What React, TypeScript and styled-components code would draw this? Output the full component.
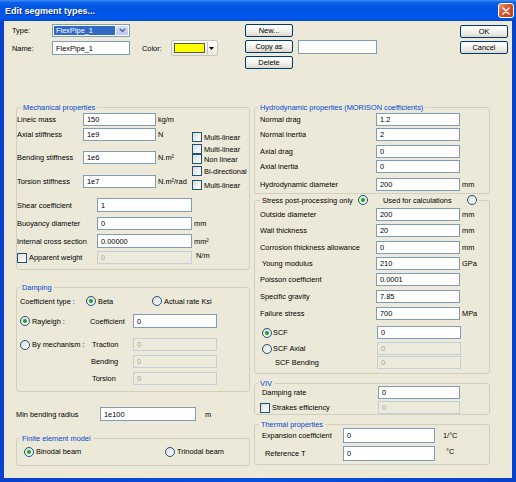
import React from 'react';
import styled, { createGlobalStyle } from 'styled-components';

const FONT = `'Liberation Sans', Arial, sans-serif`;
const SIZE = '7.4px';

const GlobalStyle = createGlobalStyle`
  html, body {
    margin: 0;
    padding: 0;
    background: #ffffff;
  }
  body {
    font-family: ${FONT};
    font-size: ${SIZE};
    color: #000;
  }
  * {
    box-sizing: border-box;
  }
`;

// fenêtre XP
const Window = styled.div`
  width: 516px;
  height: 482px;
  display: flex;
  flex-direction: column;
  background: #0a4bda;
  overflow: hidden;
`;

const TitleBar = styled.div`
  height: 21px;
  flex: none;
  display: flex;
  align-items: center;
  justify-content: space-between;
  padding: 0 2px 0 5px;
  background: linear-gradient(
    to bottom,
    #3d8ef7 0%,
    #0b61e8 12%,
    #0054e3 45%,
    #0058ee 85%,
    #0047cf 100%
  );
  color: #fff;
  font-weight: bold;
  font-size: 9px;
  text-shadow: 1px 1px #0c2a8c;
`;

const CloseButton = styled.div`
  width: 16px;
  height: 15px;
  border: 1px solid #fff;
  border-radius: 3px;
  background: linear-gradient(135deg, #ec9a7c 0%, #d7532b 45%, #c3380f 100%);
  display: flex;
  align-items: center;
  justify-content: center;
`;

const Frame = styled.div`
  flex: 1;
  display: flex;
  padding: 0 4px 4px 4px;
  background: linear-gradient(to right, #0842cd, #0a4fdd 50%, #0842cd);
`;

const Body = styled.div`
  flex: 1;
  display: flex;
  flex-direction: column;
  background: #ece9d8;
`;

// en-tête : type, nom, couleur, boutons
const TopBar = styled.div`
  height: 86px;
  flex: none;
  display: flex;
  align-items: flex-start;
  padding: 3px 4px 0 8px;
`;

const IdentityGrid = styled.div`
  display: grid;
  grid-template-columns: 40px 78px 12px 29px 47px;
  grid-template-rows: 13px 16px;
  row-gap: 3px;
  align-items: center;
`;

const Combo = styled.div`
  height: 13px;
  display: flex;
  padding: 1px;
  border: 1px solid #7f9db9;
  background: #fff;
`;

const ComboText = styled.span`
  flex: 1;
  display: flex;
  align-items: center;
  padding-left: 2px;
  background: #316ac5;
  color: #fff;
`;

const ComboArrow = styled.span`
  width: 12px;
  display: flex;
  align-items: center;
  justify-content: center;
  margin-left: 1px;
  background: linear-gradient(to bottom, #d4e0fb, #b6c9f4);
  border-radius: 1px;
`;

const ColorButton = styled.div`
  height: 16px;
  display: flex;
  align-items: center;
  padding: 0 2px;
  border: 1px solid #c9c6b8;
  border-radius: 2px;
  background: linear-gradient(to bottom, #fefefe, #ebe8dc);
`;

const Swatch = styled.span<{ $color: string }>`
  width: 31px;
  height: 10px;
  border: 1px solid #555;
  background: ${(p) => p.$color};
`;

const ColorDrop = styled.span`
  flex: 1;
  display: flex;
  align-items: center;
  justify-content: center;
  height: 12px;
  margin-left: 2px;
  border-left: 1px solid #c5c2b2;
`;

const ButtonColumn = styled.div<{ $ml: number; $mt?: number }>`
  display: flex;
  flex-direction: column;
  gap: 3px;
  margin-left: ${(p) => p.$ml}px;
  margin-top: ${(p) => p.$mt ?? 0}px;
`;

const Button = styled.button`
  width: 48px;
  height: 13px;
  padding: 0;
  font-family: ${FONT};
  font-size: ${SIZE};
  color: #000;
  border: 1px solid #003c74;
  border-radius: 2px;
  background: linear-gradient(to bottom, #ffffff 0%, #f3f2ec 55%, #dcd7cb 100%);
`;

const Spacer = styled.div`
  flex: 1;
`;

// colonnes
const Columns = styled.div`
  flex: 1;
  display: flex;
  gap: 4px;
  padding-left: 12px;
`;

const Column = styled.div<{ $w: number }>`
  width: ${(p) => p.$w}px;
  display: flex;
  flex-direction: column;
`;

const GroupBox = styled.div<{ $h: number; $mt?: number; $pl?: number }>`
  height: ${(p) => p.$h}px;
  margin-top: ${(p) => p.$mt ?? 0}px;
  padding-left: ${(p) => p.$pl ?? 0}px;
  border: 1px solid #d0d0bf;
  border-radius: 3px;
  display: flex;
  flex-direction: column;
  flex: none;
`;

const Legend = styled.div<{ $ml?: number }>`
  align-self: flex-start;
  height: 10px;
  display: flex;
  align-items: center;
  margin: -6px 0 0 ${(p) => p.$ml ?? 3}px;
  padding: 0 2px;
  background: #ece9d8;
  color: #0046d5;
  white-space: nowrap;
`;

const LegendText = styled.span<{ $w?: number; $ml?: number }>`
  width: ${(p) => (p.$w ? `${p.$w}px` : 'auto')};
  margin-left: ${(p) => p.$ml ?? 0}px;
  color: #000;
`;

const FieldRow = styled.div<{ $cols: string; $mt?: number; $h?: number }>`
  display: grid;
  grid-template-columns: ${(p) => p.$cols};
  align-items: center;
  height: ${(p) => p.$h ?? 13}px;
  margin-top: ${(p) => p.$mt ?? 0}px;
  white-space: nowrap;
  flex: none;
`;

const Label = styled.span<{ $indent?: number }>`
  padding-left: ${(p) => p.$indent ?? 0}px;
  overflow: hidden;
`;

const Unit = styled.span<{ $pl?: number; $up?: number }>`
  padding-left: ${(p) => p.$pl ?? 2}px;
  position: relative;
  top: ${(p) => -(p.$up ?? 0)}px;
  overflow: hidden;
`;

const TextBox = styled.input`
  height: 100%;
  width: 100%;
  min-width: 0;
  margin: 0;
  padding: 0 0 0 3px;
  font-family: ${FONT};
  font-size: ${SIZE};
  color: #000;
  border: 1px solid #7f9db9;
  background: #fff;
  outline: none;

  &:disabled {
    color: #aca899;
    border-color: #c3cfd9;
    background: #ebeadb;
  }
`;

const CopyAsBox = styled(TextBox)`
  width: 79px;
  height: 14px;
  margin-left: 5px;
  margin-top: 16px;
`;

const StiffnessBlock = styled.div`
  height: 77px;
  display: flex;
  flex: none;
`;

const RowStack = styled.div<{ $w: number }>`
  width: ${(p) => p.$w}px;
  display: flex;
  flex-direction: column;
`;

const CheckStack = styled.div`
  display: flex;
  flex-direction: column;
`;

const Option = styled.label<{ $mt?: number; $w?: number; $gap?: number; $pl?: number }>`
  display: flex;
  align-items: center;
  gap: ${(p) => p.$gap ?? 2}px;
  height: 10px;
  width: ${(p) => (p.$w ? `${p.$w}px` : 'auto')};
  margin-top: ${(p) => p.$mt ?? 0}px;
  padding-left: ${(p) => p.$pl ?? 0}px;
  white-space: nowrap;
  flex: none;
`;

const CheckBox = styled.span`
  width: 10px;
  height: 10px;
  flex: none;
  border: 1px solid #1c5180;
  background: linear-gradient(135deg, #dcdcd5, #ffffff);
`;

const Radio = styled.span<{ $checked?: boolean }>`
  width: 10px;
  height: 10px;
  flex: none;
  border-radius: 50%;
  border: 1px solid #1c5180;
  background: linear-gradient(135deg, #dcdcd5, #ffffff);
  display: inline-flex;
  align-items: center;
  justify-content: center;

  &::after {
    content: '';
    width: 4px;
    height: 4px;
    border-radius: 50%;
    background: #21a121;
    display: ${(p) => (p.$checked ? 'block' : 'none')};
  }
`;

const OptionRow = styled.div<{ $mt?: number; $h?: number }>`
  display: flex;
  align-items: center;
  height: ${(p) => p.$h ?? 10}px;
  margin-top: ${(p) => p.$mt ?? 0}px;
  white-space: nowrap;
  flex: none;
`;

const FixedLabel = styled.span<{ $w: number }>`
  width: ${(p) => p.$w}px;
  flex: none;
`;

const Chevron = () => (
  <svg width="7" height="5" viewBox="0 0 7 5">
    <path d="M0.8 0.8 L3.5 3.6 L6.2 0.8" fill="none" stroke="#4d6185" strokeWidth="1.4" />
  </svg>
);

const DownTriangle = () => (
  <svg width="5" height="3" viewBox="0 0 5 3">
    <path d="M0 0 H5 L2.5 3 Z" fill="#000" />
  </svg>
);

const CloseX = () => (
  <svg width="8" height="8" viewBox="0 0 8 8">
    <path d="M1 1 L7 7 M7 1 L1 7" stroke="#fff" strokeWidth="1.6" strokeLinecap="round" />
  </svg>
);

type Field = {
  label: string;
  value: string;
  unit?: string;
  mt: number;
  h?: number;
  indent?: number;
  disabled?: boolean;
};

const STIFF_COLS = '66px 73px 36px';
const MECH_COLS = '80px 95px auto';
const HYDRO_COLS = '116px 84px auto';
const DAMP_COLS = '70px 43px 84px';
const SCF_COLS = '117px 84px';

const stiffness: Field[] = [
  { label: 'Lineic mass', value: '150', unit: 'kg/m', mt: 1 },
  { label: 'Axial stiffness', value: '1e9', unit: 'N', mt: 2 },
  { label: 'Bending stiffness', value: '1e6', unit: 'N.m²', mt: 10 },
  { label: 'Torsion stiffness', value: '1e7', unit: 'N.m²/rad', mt: 11 },
];

const checks = [
  { label: 'Multi-linear', mt: 20 },
  { label: 'Multi-linear', mt: 2 },
  { label: 'Non linear', mt: 0 },
  { label: 'Bi-directional', mt: 2 },
  { label: 'Multi-linear', mt: 4 },
];

const hydro: Field[] = [
  { label: 'Normal drag', value: '1.2', mt: 1 },
  { label: 'Normal inertia', value: '2', mt: 2 },
  { label: 'Axial drag', value: '0', mt: 4 },
  { label: 'Axial inertia', value: '0', mt: 2 },
  { label: 'Hydrodynamic diameter', value: '200', unit: 'mm', mt: 5 },
];

const stress: Field[] = [
  { label: 'Outside diameter', value: '200', unit: 'mm', mt: 3 },
  { label: 'Wall thickness', value: '20', unit: 'mm', mt: 3 },
  { label: 'Corrosion thickness allowance', value: '0', unit: 'mm', mt: 4 },
  { label: 'Young modulus', value: '210', unit: 'GPa', mt: 3, indent: 2 },
  { label: 'Poisson coefficient', value: '0.0001', mt: 3 },
  { label: 'Specific gravity', value: '7.85', mt: 4 },
  { label: 'Failure stress', value: '700', unit: 'MPa', mt: 4 },
];

function Row({ field, cols }: { field: Field; cols: string }) {
  return (
    <FieldRow $cols={cols} $mt={field.mt} $h={field.h}>
      <Label $indent={field.indent}>{field.label}</Label>
      <TextBox readOnly value={field.value} disabled={field.disabled} />
      {field.unit ? <Unit>{field.unit}</Unit> : <span />}
    </FieldRow>
  );
}

export default function App() {
  return (
    <>
      <GlobalStyle />
      <Window>
        <TitleBar>
          <span>Edit segment types...</span>
          <CloseButton>
            <CloseX />
          </CloseButton>
        </TitleBar>
        <Frame>
          <Body>
            <TopBar>
              <IdentityGrid>
                <Label>Type:</Label>
                <Combo>
                  <ComboText>FlexPipe_1</ComboText>
                  <ComboArrow>
                    <Chevron />
                  </ComboArrow>
                </Combo>
                <span />
                <span />
                <span />
                <Label>Name:</Label>
                <CopyAsBox as="input" readOnly value="FlexPipe_1" style={{ width: 78, margin: 0 }} />
                <span />
                <Label>Color:</Label>
                <ColorButton>
                  <Swatch $color="#ffff00" />
                  <ColorDrop>
                    <DownTriangle />
                  </ColorDrop>
                </ColorButton>
              </IdentityGrid>
              <ButtonColumn $ml={27}>
                <Button>New...</Button>
                <Button>Copy as</Button>
                <Button>Delete</Button>
              </ButtonColumn>
              <CopyAsBox readOnly value="" />
              <Spacer />
              <ButtonColumn $ml={0} $mt={1}>
                <Button>OK</Button>
                <Button>Cancel</Button>
              </ButtonColumn>
            </TopBar>

            <Columns>
              <Column $w={234}>
                <GroupBox $h={163}>
                  <Legend $ml={4}>Mechanical properties</Legend>
                  <StiffnessBlock>
                    <RowStack $w={175}>
                      {stiffness.map((f) => (
                        <Row key={f.label} field={f} cols={STIFF_COLS} />
                      ))}
                    </RowStack>
                    <CheckStack>
                      {checks.map((c, i) => (
                        <Option key={i} $mt={c.mt}>
                          <CheckBox />
                          {c.label}
                        </Option>
                      ))}
                    </CheckStack>
                  </StiffnessBlock>
                  <Row field={{ label: 'Shear coefficient', value: '1', mt: 9, h: 14 }} cols={MECH_COLS} />
                  <Row field={{ label: 'Buoyancy diameter', value: '0', unit: 'mm', mt: 5 }} cols={MECH_COLS} />
                  <Row
                    field={{ label: 'Internal cross section', value: '0.00000', unit: 'mm²', mt: 4, h: 14 }}
                    cols={MECH_COLS}
                  />
                  <FieldRow $cols={MECH_COLS} $mt={3}>
                    <Option>
                      <CheckBox />
                      Apparent weight
                    </Option>
                    <TextBox readOnly value="0" disabled />
                    <Unit $pl={4} $up={2}>
                      N/m
                    </Unit>
                  </FieldRow>
                </GroupBox>

                <GroupBox $h={105} $mt={17} $pl={3}>
                  <Legend $ml={0}>Damping</Legend>
                  <OptionRow $mt={4}>
                    <FixedLabel $w={66}>Coefficient type :</FixedLabel>
                    <Option $w={66}>
                      <Radio $checked />
                      Beta
                    </Option>
                    <Option>
                      <Radio />
                      Actual rate Ksi
                    </Option>
                  </OptionRow>
                  <FieldRow $cols={DAMP_COLS} $mt={8} $h={14}>
                    <Option>
                      <Radio $checked />
                      Rayleigh :
                    </Option>
                    <Label>Coefficient</Label>
                    <TextBox readOnly value="0" />
                  </FieldRow>
                  <FieldRow $cols={DAMP_COLS} $mt={10}>
                    <Option>
                      <Radio />
                      By mechanism :
                    </Option>
                    <Label $indent={2}>Traction</Label>
                    <TextBox readOnly value="0" disabled />
                  </FieldRow>
                  <FieldRow $cols={DAMP_COLS} $mt={4}>
                    <span />
                    <Label $indent={1}>Bending</Label>
                    <TextBox readOnly value="0" disabled />
                  </FieldRow>
                  <FieldRow $cols={DAMP_COLS} $mt={4}>
                    <span />
                    <Label $indent={2}>Torsion</Label>
                    <TextBox readOnly value="0" disabled />
                  </FieldRow>
                </GroupBox>

                <FieldRow $cols="84px 96px auto" $mt={15} $h={14}>
                  <Label>Min bending radius</Label>
                  <TextBox readOnly value="1e100" />
                  <Unit $pl={9}>m</Unit>
                </FieldRow>

                <GroupBox $h={28} $mt={17} $pl={7}>
                  <Legend $ml={-4}>Finite element model</Legend>
                  <OptionRow $mt={3} $h={11}>
                    <Option $w={141}>
                      <Radio $checked />
                      Binodal beam
                    </Option>
                    <Option>
                      <Radio />
                      Trinodal beam
                    </Option>
                  </OptionRow>
                </GroupBox>
              </Column>

              <Column $w={236}>
                <GroupBox $h={87} $pl={5}>
                  <Legend $ml={-2}>Hydrodynamic properties (MORISON coefficients)</Legend>
                  {hydro.map((f) => (
                    <Row key={f.label} field={f} cols={HYDRO_COLS} />
                  ))}
                </GroupBox>

                <GroupBox $h={174} $mt={6} $pl={5}>
                  <Legend $ml={0}>
                    <LegendText $w={96}>Stress post-processing only</LegendText>
                    <Radio $checked />
                    <LegendText $w={84} $ml={15}>
                      Used for calculations
                    </LegendText>
                    <Radio />
                  </Legend>
                  {stress.map((f) => (
                    <Row key={f.label} field={f} cols={HYDRO_COLS} />
                  ))}
                  <FieldRow $cols={SCF_COLS} $mt={6}>
                    <Option $gap={1} $pl={2}>
                      <Radio $checked />
                      SCF
                    </Option>
                    <TextBox readOnly value="0" />
                  </FieldRow>
                  <FieldRow $cols={SCF_COLS} $mt={3}>
                    <Option $gap={1} $pl={2}>
                      <Radio />
                      SCF Axial
                    </Option>
                    <TextBox readOnly value="0" disabled />
                  </FieldRow>
                  <FieldRow $cols={SCF_COLS} $mt={1}>
                    <Label $indent={15}>SCF Bending</Label>
                    <TextBox readOnly value="0" disabled />
                  </FieldRow>
                </GroupBox>

                <GroupBox $h={32} $mt={9} $pl={5}>
                  <Legend $ml={-2}>VIV</Legend>
                  <FieldRow $cols="118px 82px" $mt={-2}>
                    <Label $indent={2}>Damping rate</Label>
                    <TextBox readOnly value="0" />
                  </FieldRow>
                  <FieldRow $cols="118px 82px" $mt={2}>
                    <Option>
                      <CheckBox />
                      Strakes efficiency
                    </Option>
                    <TextBox readOnly value="0" disabled />
                  </FieldRow>
                </GroupBox>

                <GroupBox $h={41} $mt={9} $pl={5}>
                  <Legend $ml={-1}>Thermal properties</Legend>
                  <FieldRow $cols="83px 92px auto" $mt={-1} $h={15}>
                    <Label $indent={2}>Expansion coefficient</Label>
                    <TextBox readOnly value="0" />
                    <Unit $pl={8}>1/°C</Unit>
                  </FieldRow>
                  <FieldRow $cols="83px 92px auto" $mt={3} $h={15}>
                    <Label $indent={5}>Reference T</Label>
                    <TextBox readOnly value="0" />
                    <Unit $pl={11} $up={2}>
                      °C
                    </Unit>
                  </FieldRow>
                </GroupBox>
              </Column>
            </Columns>
          </Body>
        </Frame>
      </Window>
    </>
  );
}
